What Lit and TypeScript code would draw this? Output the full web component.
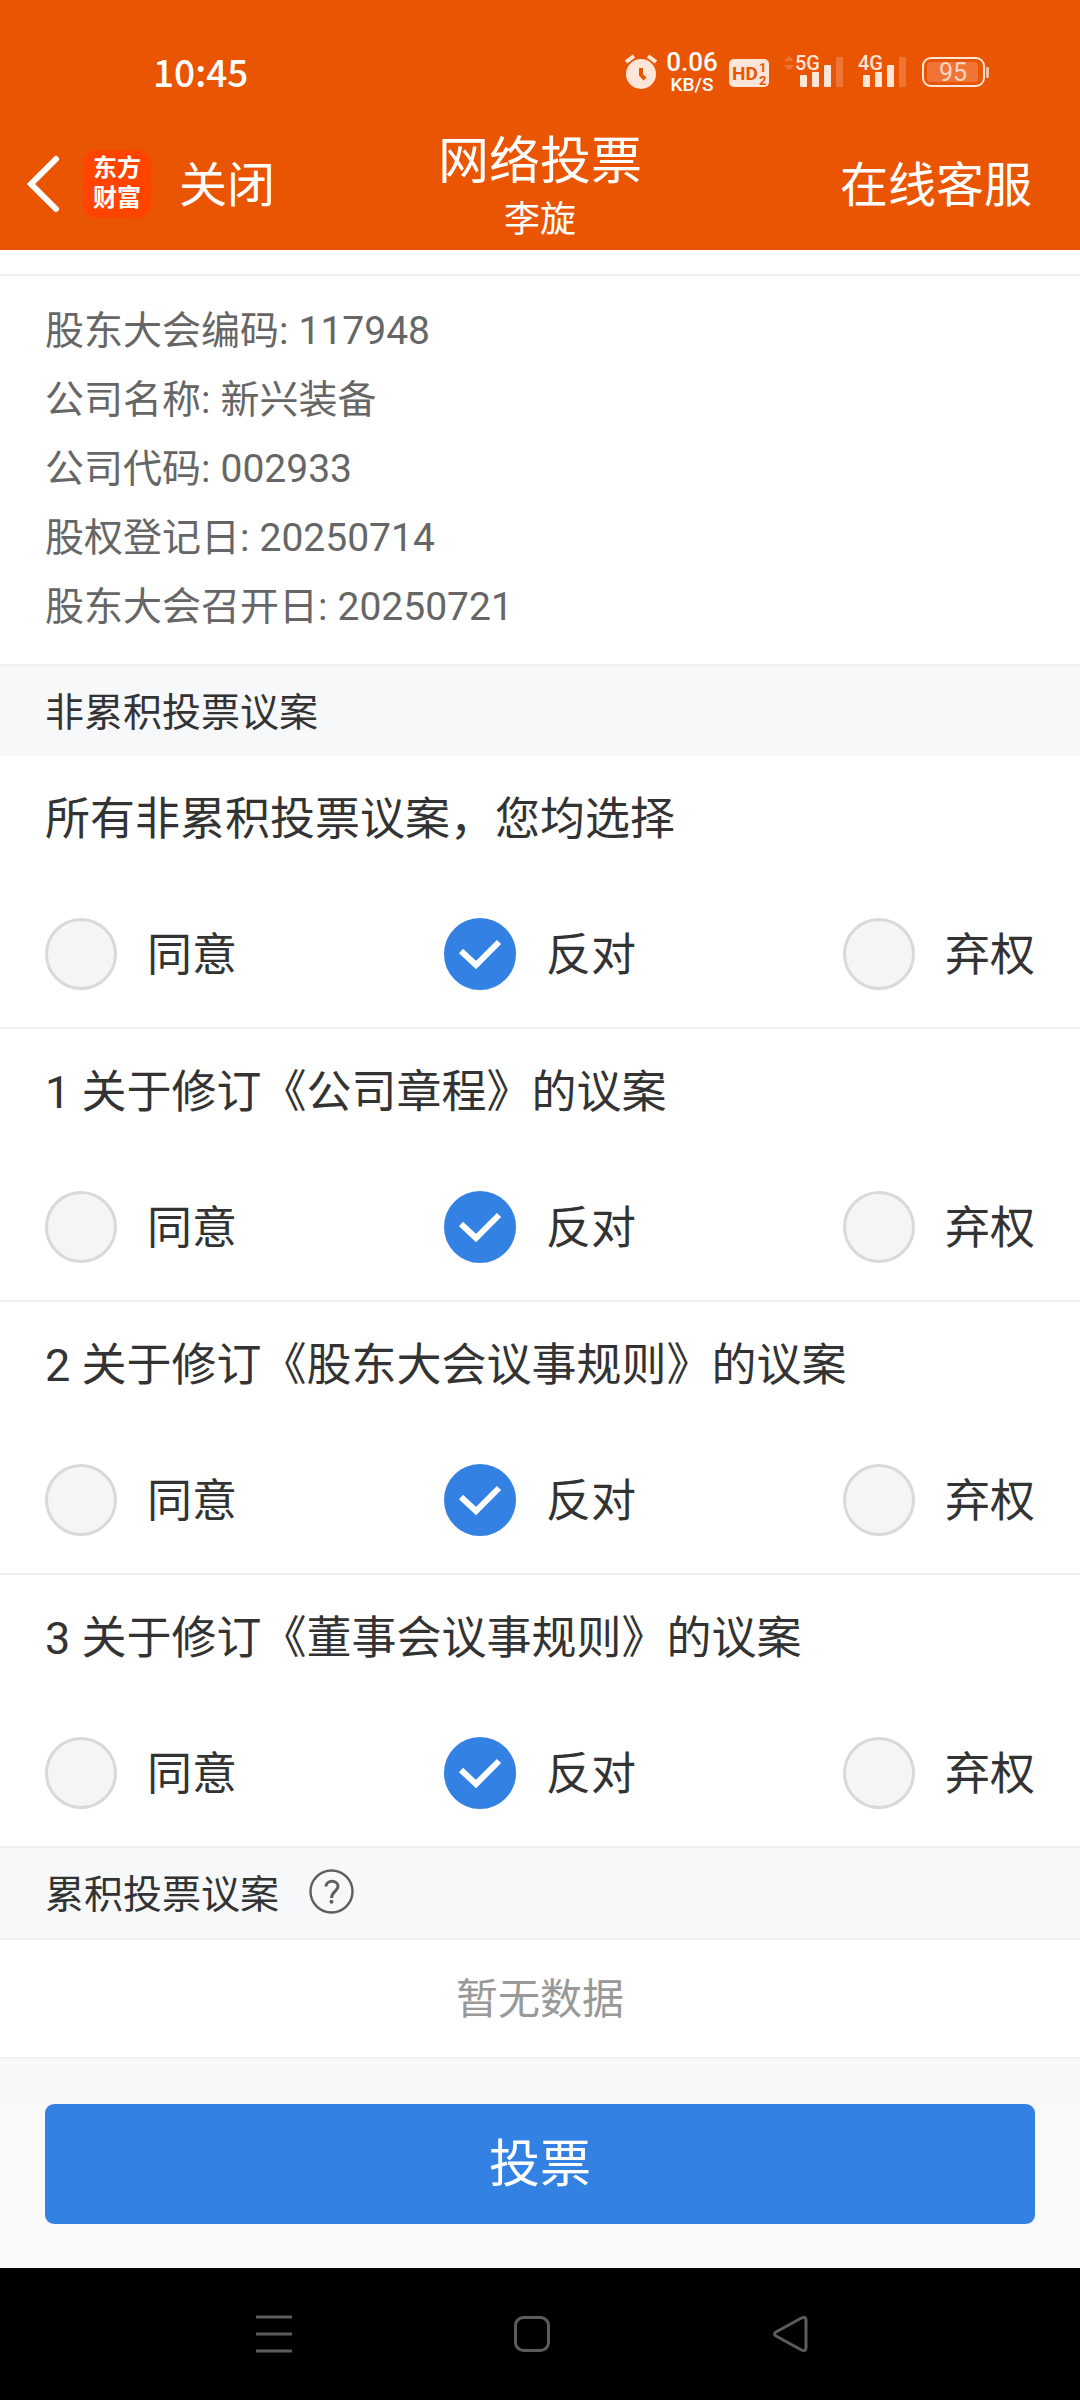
import { LitElement, html, svg, css } from "lit";
import { customElement, state } from "lit/decorators.js";

interface Motion {
  id: string;
  title: string;
}

const CHOICES = ["同意", "反对", "弃权"];

const MOTIONS: Motion[] = [
  { id: "m1", title: "1 关于修订《公司章程》的议案" },
  { id: "m2", title: "2 关于修订《股东大会议事规则》的议案" },
  { id: "m3", title: "3 关于修订《董事会议事规则》的议案" },
];

const MEETING: [string, string][] = [
  ["股东大会编码", "117948"],
  ["公司名称", "新兴装备"],
  ["公司代码", "002933"],
  ["股权登记日", "20250714"],
  ["股东大会召开日", "20250721"],
];

@customElement("status-bar")
export class StatusBar extends LitElement {
  static styles = css`
    :host {
      display: flex;
      align-items: center;
      justify-content: space-between;
      box-sizing: border-box;
      height: 126px;
      padding: 20px 90px 0 153px;
      color: #fff;
    }
    .time {
      padding-bottom: 4px;
      font-family: "Noto Sans CJK SC", sans-serif;
      font-size: 37px;
      font-weight: 500;
      line-height: 44px;
    }
    .icons {
      display: block;
      width: 370px;
      height: 60px;
    }
    .strong {
      fill: #fff;
      font-family: Roboto, sans-serif;
      font-weight: 500;
    }
    .soft {
      fill: #fde5d8;
      font-family: Roboto, sans-serif;
      font-weight: 500;
    }
    .level {
      fill: #fcd6c1;
      font-family: Roboto, sans-serif;
      font-weight: 400;
    }
    .cut {
      fill: #ea5504;
      font-family: Roboto, sans-serif;
      font-weight: 700;
    }
  `;

  private signal(x: number, label: string) {
    return svg`
      <text class="soft" x=${x - 5} y="19" font-size="20">${label}</text>
      <rect x=${x} y="24" width="7" height="12" rx="1" fill="#fde5d8" />
      <rect x=${x + 12} y="21" width="7" height="15" rx="1" fill="#fde5d8" />
      <rect x=${x + 24} y="14" width="7" height="22" rx="1" fill="#fde5d8" />
      <rect x=${x + 36} y="6" width="7" height="30" rx="1" fill="#f07436" />
    `;
  }

  render() {
    return html`
      <span class="time">10:45</span>
      <svg class="icons" viewBox="0 -8 370 60" aria-hidden="true">
        <circle cx="21" cy="23" r="15" fill="#fde5d8" />
        <path d="M6 11 L14 5 M28 5 L36 11" stroke="#fde5d8" stroke-width="4" fill="none" />
        <path d="M21 17 V24 L25 28" stroke="#ea5504" stroke-width="4" fill="none" />
        <text class="strong" x="72" y="20" font-size="26" text-anchor="middle">0.06</text>
        <text class="strong" x="72" y="40" font-size="19" text-anchor="middle">KB/S</text>
        <rect x="109" y="8" width="40" height="28" rx="5" fill="#fde5d8" />
        <text class="cut" x="112" y="29" font-size="19">HD</text>
        <text class="cut" x="139" y="21" font-size="13">1</text>
        <text class="cut" x="139" y="34" font-size="13">2</text>
        <path d="M164 10 L169 5 L174 10 Z M164 14 L169 19 L174 14 Z" fill="#f07436" />
        ${this.signal(180, "5G")} ${this.signal(243, "4G")}
        <rect x="303" y="7" width="61" height="28" rx="8" fill="none" stroke="#fde5d8" stroke-width="2" />
        <rect x="307" y="11" width="51" height="20" rx="3" fill="#f07436" />
        <rect x="366" y="16" width="3" height="11" rx="1" fill="#f9bd9b" />
        <text class="level" x="333" y="30" font-size="25" text-anchor="middle">95</text>
      </svg>
    `;
  }
}

@customElement("title-bar")
export class TitleBar extends LitElement {
  static styles = css`
    :host {
      display: grid;
      grid-template-columns: 1fr auto 1fr;
      align-items: start;
      box-sizing: border-box;
      height: 124px;
      padding: 5px 48px 0 24px;
      color: #fff;
    }
    .left {
      display: flex;
      align-items: center;
      margin-top: 18px;
    }
    .plain {
      padding: 0;
      border: 0;
      background: none;
      color: inherit;
      font: inherit;
      font-size: 48px;
      line-height: 66px;
    }
    .close {
      padding-top: 4px;
    }
    .back-icon {
      display: block;
      width: 40px;
      height: 66px;
    }
    .logo {
      display: grid;
      place-content: center;
      box-sizing: border-box;
      width: 68px;
      height: 68px;
      margin: 0 28px 0 19px;
      padding-bottom: 2px;
      border-radius: 14px;
      background: #ff4400;
      font-size: 24px;
      font-weight: 700;
      line-height: 30px;
      font-family: Roboto, "Noto Sans CJK SC", sans-serif;
      text-align: center;
    }
    .logo-line {
      display: block;
    }
    .heading {
      margin-left: 24px;
      text-align: center;
    }
    .title {
      margin: 0;
      font-size: 51px;
      font-weight: 400;
      line-height: 62px;
    }
    .name {
      margin: 0;
      font-size: 36px;
      line-height: 54px;
    }
    .service {
      justify-self: end;
      margin-top: 22px;
      color: inherit;
      font-size: 48px;
      line-height: 66px;
      text-decoration: none;
    }
  `;

  render() {
    return html`
      <div class="left">
        <button class="plain" type="button" aria-label="返回">
          <svg class="back-icon" viewBox="0 0 40 66" fill="none" stroke="#fff" stroke-width="6" stroke-linecap="round">
            <path d="M32 8 L7 33 L32 58" />
          </svg>
        </button>
        <span class="logo"><span class="logo-line">东方</span><span class="logo-line">财富</span></span>
        <button class="plain close" type="button">关闭</button>
      </div>
      <div class="heading">
        <h1 class="title">网络投票</h1>
        <p class="name">李旋</p>
      </div>
      <a class="service" href="#service">在线客服</a>
    `;
  }
}

@customElement("app-root")
export class AppRoot extends LitElement {
  static styles = css`
    :host {
      display: flex;
      flex-direction: column;
      min-height: 100vh;
      background: #fafafa;
      color: #333;
      font-family: Roboto, "Noto Sans CJK SC", sans-serif;
      font-size: 45px;
    }
    .top {
      background: #ea5504;
    }
    .strip {
      height: 24px;
      background: #fff;
      border-bottom: 2px solid #f0f0f0;
    }
    .info {
      margin: 0;
      padding: 21px 45px 22px;
      border-bottom: 2px solid #f0f0f0;
      background: #fff;
      color: #666;
      font-size: 39px;
      line-height: 69px;
    }
    .info-row {
      display: flex;
      gap: 10px;
    }
    .info-value {
      margin: 0;
    }
    .section {
      display: flex;
      align-items: center;
      gap: 30px;
      box-sizing: border-box;
      height: 90px;
      padding: 0 45px 4px;
      background: #f7f8fa;
    }
    .section-title {
      margin: 0;
      font-size: 39px;
      font-weight: 400;
    }
    .help {
      display: block;
      padding: 0;
      border: 0;
      background: none;
    }
    .help-icon {
      display: block;
      width: 45px;
      height: 45px;
    }
    .motion {
      min-width: 0;
      margin: 0;
      padding: 30px 45px 37px;
      border-bottom: 2px solid #f0f0f0;
      background: #fff;
    }
    .motion-title {
      margin: 0 0 64px;
      font-size: 45px;
      font-weight: 400;
      line-height: 68px;
    }
    .options {
      display: flex;
      justify-content: space-between;
    }
    .option {
      display: flex;
      align-items: center;
      gap: 30px;
      line-height: 68px;
    }
    .choice {
      padding-top: 4px;
    }
    .mark {
      display: grid;
      width: 72px;
      height: 72px;
    }
    .radio {
      grid-area: 1 / 1;
      box-sizing: border-box;
      width: 72px;
      height: 72px;
      margin: 0;
      border: 3px solid #d9d9d9;
      border-radius: 50%;
      background: #f5f5f5;
      appearance: none;
    }
    .radio:checked {
      border-color: #3381e3;
      background: #3381e3;
    }
    .check {
      grid-area: 1 / 1;
      z-index: 1;
      visibility: hidden;
      pointer-events: none;
    }
    .radio:checked + .check {
      visibility: visible;
    }
    .empty {
      margin: 0;
      padding-top: 3px;
      border: solid #f0f0f0;
      border-width: 2px 0;
      background: #fff;
      color: #999;
      font-size: 42px;
      line-height: 114px;
      text-align: center;
    }
    .gap {
      height: 45px;
      background: #f7f8fa;
    }
    .actions {
      display: flex;
      flex: 1;
      flex-direction: column;
      padding: 0 45px 44px;
    }
    .submit {
      height: 120px;
      padding: 0 0 8px;
      border: 0;
      border-radius: 9px;
      background: #3381e3;
      color: #fff;
      font-family: inherit;
      font-size: 51px;
    }
    .nav {
      display: flex;
      align-items: center;
      justify-content: space-between;
      height: 132px;
      padding: 0 268px 0 252px;
      background: #000;
    }
    .nav-button {
      padding: 0;
      border: 0;
      background: none;
    }
    .nav-icon {
      display: block;
      width: 44px;
      height: 44px;
      fill: none;
      stroke: #5c5c5c;
      stroke-width: 3;
      stroke-linejoin: round;
    }
  `;

  @state() private votes: Record<string, string> = {
    all: "反对",
    m1: "反对",
    m2: "反对",
    m3: "反对",
  };

  private choose(id: string, choice: string) {
    if (id === "all") {
      this.votes = { all: choice, m1: choice, m2: choice, m3: choice };
      return;
    }
    const next = { ...this.votes, [id]: choice };
    const same = MOTIONS.every((motion) => next[motion.id] === choice);
    this.votes = { ...next, all: same ? choice : "" };
  }

  private renderMotion(motion: Motion) {
    return html`
      <section class="motion" role="radiogroup" aria-labelledby="title-${motion.id}">
        <h3 class="motion-title" id="title-${motion.id}">${motion.title}</h3>
        <div class="options">
          ${CHOICES.map(
            (choice) => html`
              <label class="option">
                <span class="mark">
                  <input
                    class="radio"
                    type="radio"
                    name=${motion.id}
                    .checked=${this.votes[motion.id] === choice}
                    @change=${() => this.choose(motion.id, choice)}
                  />
                  <svg class="check" viewBox="0 0 72 72" fill="none" stroke="#fff" stroke-width="6">
                    <path d="M17 33 L32 47 L55 24" />
                  </svg>
                </span>
                <span class="choice">${choice}</span>
              </label>
            `
          )}
        </div>
      </section>
    `;
  }

  render() {
    return html`
      <header class="top">
        <status-bar></status-bar>
        <title-bar></title-bar>
      </header>
      <div class="strip"></div>
      <dl class="info">
        ${MEETING.map(
          ([label, value]) => html`
            <div class="info-row"><dt>${label}:</dt><dd class="info-value">${value}</dd></div>
          `
        )}
      </dl>
      <div class="section"><h2 class="section-title">非累积投票议案</h2></div>
      ${this.renderMotion({ id: "all", title: "所有非累积投票议案，您均选择" })}
      ${MOTIONS.map((motion) => this.renderMotion(motion))}
      <div class="section">
        <h2 class="section-title">累积投票议案</h2>
        <button class="help" type="button" aria-label="说明">
          <svg class="help-icon" viewBox="0 0 45 45" fill="none" stroke="#5e5e5e" stroke-width="2.4">
            <circle cx="22.5" cy="22.5" r="21" />
            <path d="M17 17.5 C17 10.5 29 10.5 29 17.5 C29 22 22.5 22.5 22.5 29" stroke-width="3" />
            <circle cx="22.5" cy="32.7" r="2" fill="#5e5e5e" stroke="none" />
          </svg>
        </button>
      </div>
      <p class="empty">暂无数据</p>
      <div class="gap"></div>
      <div class="actions"><button class="submit" type="button">投票</button></div>
      <nav class="nav">
        <button class="nav-button" type="button" aria-label="最近任务">
          <svg class="nav-icon" viewBox="0 0 44 44"><path d="M4 5 H40 M4 22 H40 M4 39 H40" /></svg>
        </button>
        <button class="nav-button" type="button" aria-label="主屏幕">
          <svg class="nav-icon" viewBox="0 0 44 44"><rect x="5.5" y="5.5" width="33" height="33" rx="8" /></svg>
        </button>
        <button class="nav-button" type="button" aria-label="返回上一级">
          <svg class="nav-icon" viewBox="0 0 44 44">
            <path d="M33.5 6 Q38 4 38 8.5 V35.5 Q38 40 33.5 38 L8 24 Q5 22 8 20 Z" />
          </svg>
        </button>
      </nav>
    `;
  }
}
